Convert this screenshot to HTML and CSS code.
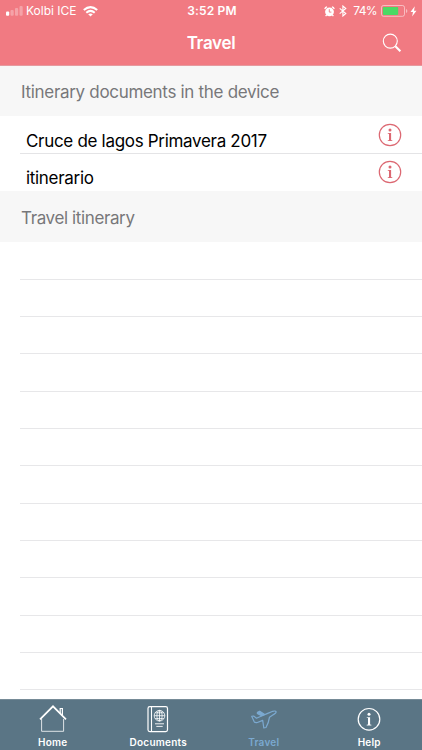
FILE: index.html
```html
<!DOCTYPE html>
<html lang="en">
<head>
    <meta charset="UTF-8">
    <meta name="viewport" content="width=device-width, initial-scale=1.0">
    <title>Travel</title>
    <link rel="stylesheet" href="styles.css">
</head>
<body>
    <div id="app">
        <header>
            <div class="status">
                <div class="carrier">
                    <svg width="17" height="10" viewBox="0 0 17 10" fill="#fff">
                        <rect x="0" y="5.5" width="3.2" height="4.2" rx="1"/>
                        <g opacity=".3">
                            <rect x="4.5" y="4" width="3.2" height="5.7" rx="1"/>
                            <rect x="9" y="2" width="3.2" height="7.7" rx="1"/>
                            <rect x="13.5" y="0" width="3.2" height="9.7" rx="1"/>
                        </g>
                    </svg>
                    <span class="carrier-name">Kolbi ICE</span>
                    <svg width="15" height="11" viewBox="0 0 15 11" fill="none" stroke="#fff" stroke-width="2">
                        <path d="M.8 4.1Q7.5-1.9 14.2 4.1"/>
                        <path d="M3.3 6.7Q7.5 3 11.7 6.7"/>
                        <path d="M5.2 8.3Q7.5 6.5 9.8 8.3L7.5 10.6Z" fill="#fff" stroke="none"/>
                    </svg>
                </div>
                <span class="clock">3:52 PM</span>
                <div class="power">
                    <svg width="11" height="11" viewBox="0 0 11 11">
                        <circle cx="5.5" cy="5.8" r="4.4" fill="#fff"/>
                        <path d="M.8 3.1Q1.2 1.2 3.1.9M7.9.9Q9.8 1.2 10.2 3.1M2.7 8.8L1.6 10.2M8.3 8.8L9.4 10.2" fill="none" stroke="#fff" stroke-width="1.3"/>
                        <path d="M5.3 3.2V6.1H7.4" fill="none" stroke="#f17a82" stroke-width=".9"/>
                    </svg>
                    <svg class="bluetooth" width="8" height="12" viewBox="0 0 8 12" fill="none" stroke="#fff" stroke-width="1.1">
                        <path d="M.7 3.3L6.8 8.5L3.9 11V1L6.8 3.5L.7 8.7"/>
                    </svg>
                    <span class="percent">74%</span>
                    <svg class="battery" width="27" height="12" viewBox="0 0 27 12">
                        <rect x=".5" y=".5" width="23" height="10.8" rx="2" fill="none" stroke="#fff" stroke-opacity=".5"/>
                        <rect x="1.9" y="1.9" width="15.3" height="8" rx=".8" fill="#4cd964"/>
                        <path d="M25 4Q26.4 4.6 26.4 6T25 8Z" fill="#fff" opacity=".5"/>
                    </svg>
                    <svg class="bolt" width="7" height="11" viewBox="0 0 7 11">
                        <path d="M4.8.3L.5 6H3L2.1 10.6L6.5 4.7H4Z" fill="#fff"/>
                    </svg>
                </div>
            </div>
            <div class="navbar">
                <h1>Travel</h1>
                <svg class="search" width="20" height="20" viewBox="0 0 20 20" fill="none" stroke="#fff">
                    <circle cx="8.3" cy="8.1" r="7" stroke-width="1.1"/>
                    <path d="M13.4 13.2L18.4 18.2" stroke-width="2.1"/>
                </svg>
            </div>
        </header>

        <main>
            <h2>Itinerary documents in the device</h2>
            <div class="doc">
                <span>Cruce de lagos Primavera 2017</span>
                <svg class="info" width="24" height="24" viewBox="0 0 24 24">
                    <circle cx="12" cy="12" r="10.7" fill="none" stroke="currentColor" stroke-width="1.2"/>
                    <circle cx="12" cy="7" r="1.5" fill="currentColor"/>
                    <path d="M9.7 10H13.1V17L14.4 17.4V18H9.7V17.4L11 17V10.9L9.7 10.6Z" fill="currentColor"/>
                </svg>
            </div>
            <div class="doc">
                <span>itinerario</span>
                <svg class="info" width="24" height="24" viewBox="0 0 24 24">
                    <circle cx="12" cy="12" r="10.7" fill="none" stroke="currentColor" stroke-width="1.2"/>
                    <circle cx="12" cy="7" r="1.5" fill="currentColor"/>
                    <path d="M9.7 10H13.1V17L14.4 17.4V18H9.7V17.4L11 17V10.9L9.7 10.6Z" fill="currentColor"/>
                </svg>
            </div>
            <h2 class="second">Travel itinerary</h2>
            <div class="empty-rows">
                <div></div><div></div><div></div><div></div>
                <div></div><div></div><div></div><div></div>
                <div></div><div></div><div></div><div></div>
            </div>
        </main>

        <nav>
            <div class="tab">
                <svg width="28" height="28" viewBox="0 0 28 28" fill="none" stroke="#fff">
                    <path d="M2.6 14V26.3H24.6V14" stroke-width="1" opacity=".8"/>
                    <path d="M1 14.3L14 1.3L27 14.3" stroke-width="1.7"/>
                    <path d="M21.2 8V3.5H23.4V10.5" stroke-width="1.2"/>
                </svg>
                <span>Home</span>
            </div>
            <div class="tab">
                <svg width="28" height="28" viewBox="0 0 28 28" fill="none" stroke="#fff">
                    <rect x="4" y="1.6" width="19.5" height="25" rx="1.8" stroke-width="1.2"/>
                    <path d="M7.5 1.6V26.6" stroke-width="1.1"/>
                    <g stroke-width=".8">
                        <circle cx="15.5" cy="10.7" r="5.3"/>
                        <ellipse cx="15.5" cy="10.7" rx="2.6" ry="5.3"/>
                        <path d="M15.5 5.4V16M10.2 10.7H20.8M11.2 7.8H19.8M11.2 13.6H19.8"/>
                    </g>
                    <path d="M11 18.8H20M12.3 21.4H18.7" stroke-width=".9"/>
                </svg>
                <span>Documents</span>
            </div>
            <div class="tab active">
                <svg width="28" height="28" viewBox="0 0 28 28" fill="none" stroke="currentColor" stroke-width="1.2" stroke-linejoin="round">
                    <path d="M1.7 11.3L3.6 11L6.5 13.2L11 11.3L17.7 8.4L22.8 6.3Q25.8 5.5 26.2 6.9Q26.4 8 23.5 9.6L19.5 12.2Q18.8 17.5 16 22.5L13.8 22.8L12.7 15.4L7.4 17.5Q5 18.1 4.1 16.6Z"/>
                    <path d="M7.5 7.2L9.7 6.2L14.7 9.5L11.6 10.8L7.3 8.4Z" fill="currentColor"/>
                </svg>
                <span>Travel</span>
            </div>
            <div class="tab">
                <svg width="28" height="28" viewBox="0 0 28 28">
                    <circle cx="14" cy="14.3" r="10.8" fill="none" stroke="#fff" stroke-width="1.2"/>
                    <circle cx="14" cy="9.2" r="1.5" fill="#fff"/>
                    <path d="M11.7 12.2H15.1V19.4L16.4 19.8V20.4H11.7V19.8L13 19.4V13.1L11.7 12.8Z" fill="#fff"/>
                </svg>
                <span>Help</span>
            </div>
        </nav>
    </div>
</body>
</html>
```
FILE: styles.css
```css
*{
    box-sizing: border-box;
}
body{
    margin: 0;
    background-color: white;
    font-family: Inter, "Liberation Sans", sans-serif;
}
#app{
    height: 750px;
    display: flex;
    flex-direction: column;
    overflow: hidden;
}
svg{
    display: block;
    flex-shrink: 0;
}
header{
    height: 66px;
    background-color: #f17a82;
    border-bottom: 1px solid #e59a9f;
    color: white;
}
.status{
    height: 21px;
    padding: 1px 5px 0 6px;
    display: grid;
    grid-template-columns: 1fr auto 1fr;
    align-items: center;
    font-size: 12px;
    line-height: 20px;
}
.carrier, .power{
    display: flex;
    align-items: center;
}
.carrier-name{
    margin: 0 6px 0 3px;
}
.clock{
    padding-left: 1px;
    font-weight: 600;
    letter-spacing: 0.15px;
}
.power{
    justify-content: flex-end;
}
.percent{
    letter-spacing: -0.6px;
}
.bluetooth{
    margin: 0 6px 0 4px;
}
.battery{
    margin: 0 2px 0 4px;
}
.navbar{
    height: 44px;
    display: grid;
    grid-template-columns: 1fr auto 1fr;
    align-items: center;
    padding: 0 20px;
}
h1{
    grid-column: 2;
    margin: 0;
    font-size: 17px;
    font-weight: 600;
    line-height: 44px;
    letter-spacing: -0.3px;
}
.search{
    justify-self: end;
}
main{
    height: 633px;
    overflow: hidden;
}
h2{
    height: 50px;
    margin: 0;
    padding-left: 21px;
    background-color: #f7f7f7;
    color: #77777a;
    font-size: 17px;
    font-weight: 400;
    line-height: 53px;
    letter-spacing: -0.31px;
}
.doc{
    height: 37px;
    margin-left: 20px;
    padding: 0 20px 0 6px;
    display: flex;
    justify-content: space-between;
    font-size: 17px;
    line-height: 50px;
    letter-spacing: -0.31px;
}
.doc + .doc{
    height: 38px;
    border-top: 1px solid #e4e4e6;
    line-height: 48px;
}
.info{
    color: #dc6872;
    margin-top: 7px;
}
.doc + .doc .info{
    margin-top: 6px;
}
.second{
    height: 51px;
    line-height: 54px;
    letter-spacing: -0.38px;
}
.empty-rows{
    padding-top: 0.5px;
}
.empty-rows div{
    height: 37.33px;
    margin-left: 20px;
    border-bottom: 1px solid #e7e7e9;
}
nav{
    height: 51px;
    display: grid;
    grid-template-columns: repeat(4, 1fr);
    background-color: #5a7585;
    border-top: 1px solid #768b97;
    color: white;
}
.tab{
    display: flex;
    flex-direction: column;
    align-items: center;
    padding-top: 5px;
    font-size: 10px;
    font-weight: 600;
    line-height: 19px;
    letter-spacing: 0.25px;
}
.active{
    color: #7ba9d0;
}
```
